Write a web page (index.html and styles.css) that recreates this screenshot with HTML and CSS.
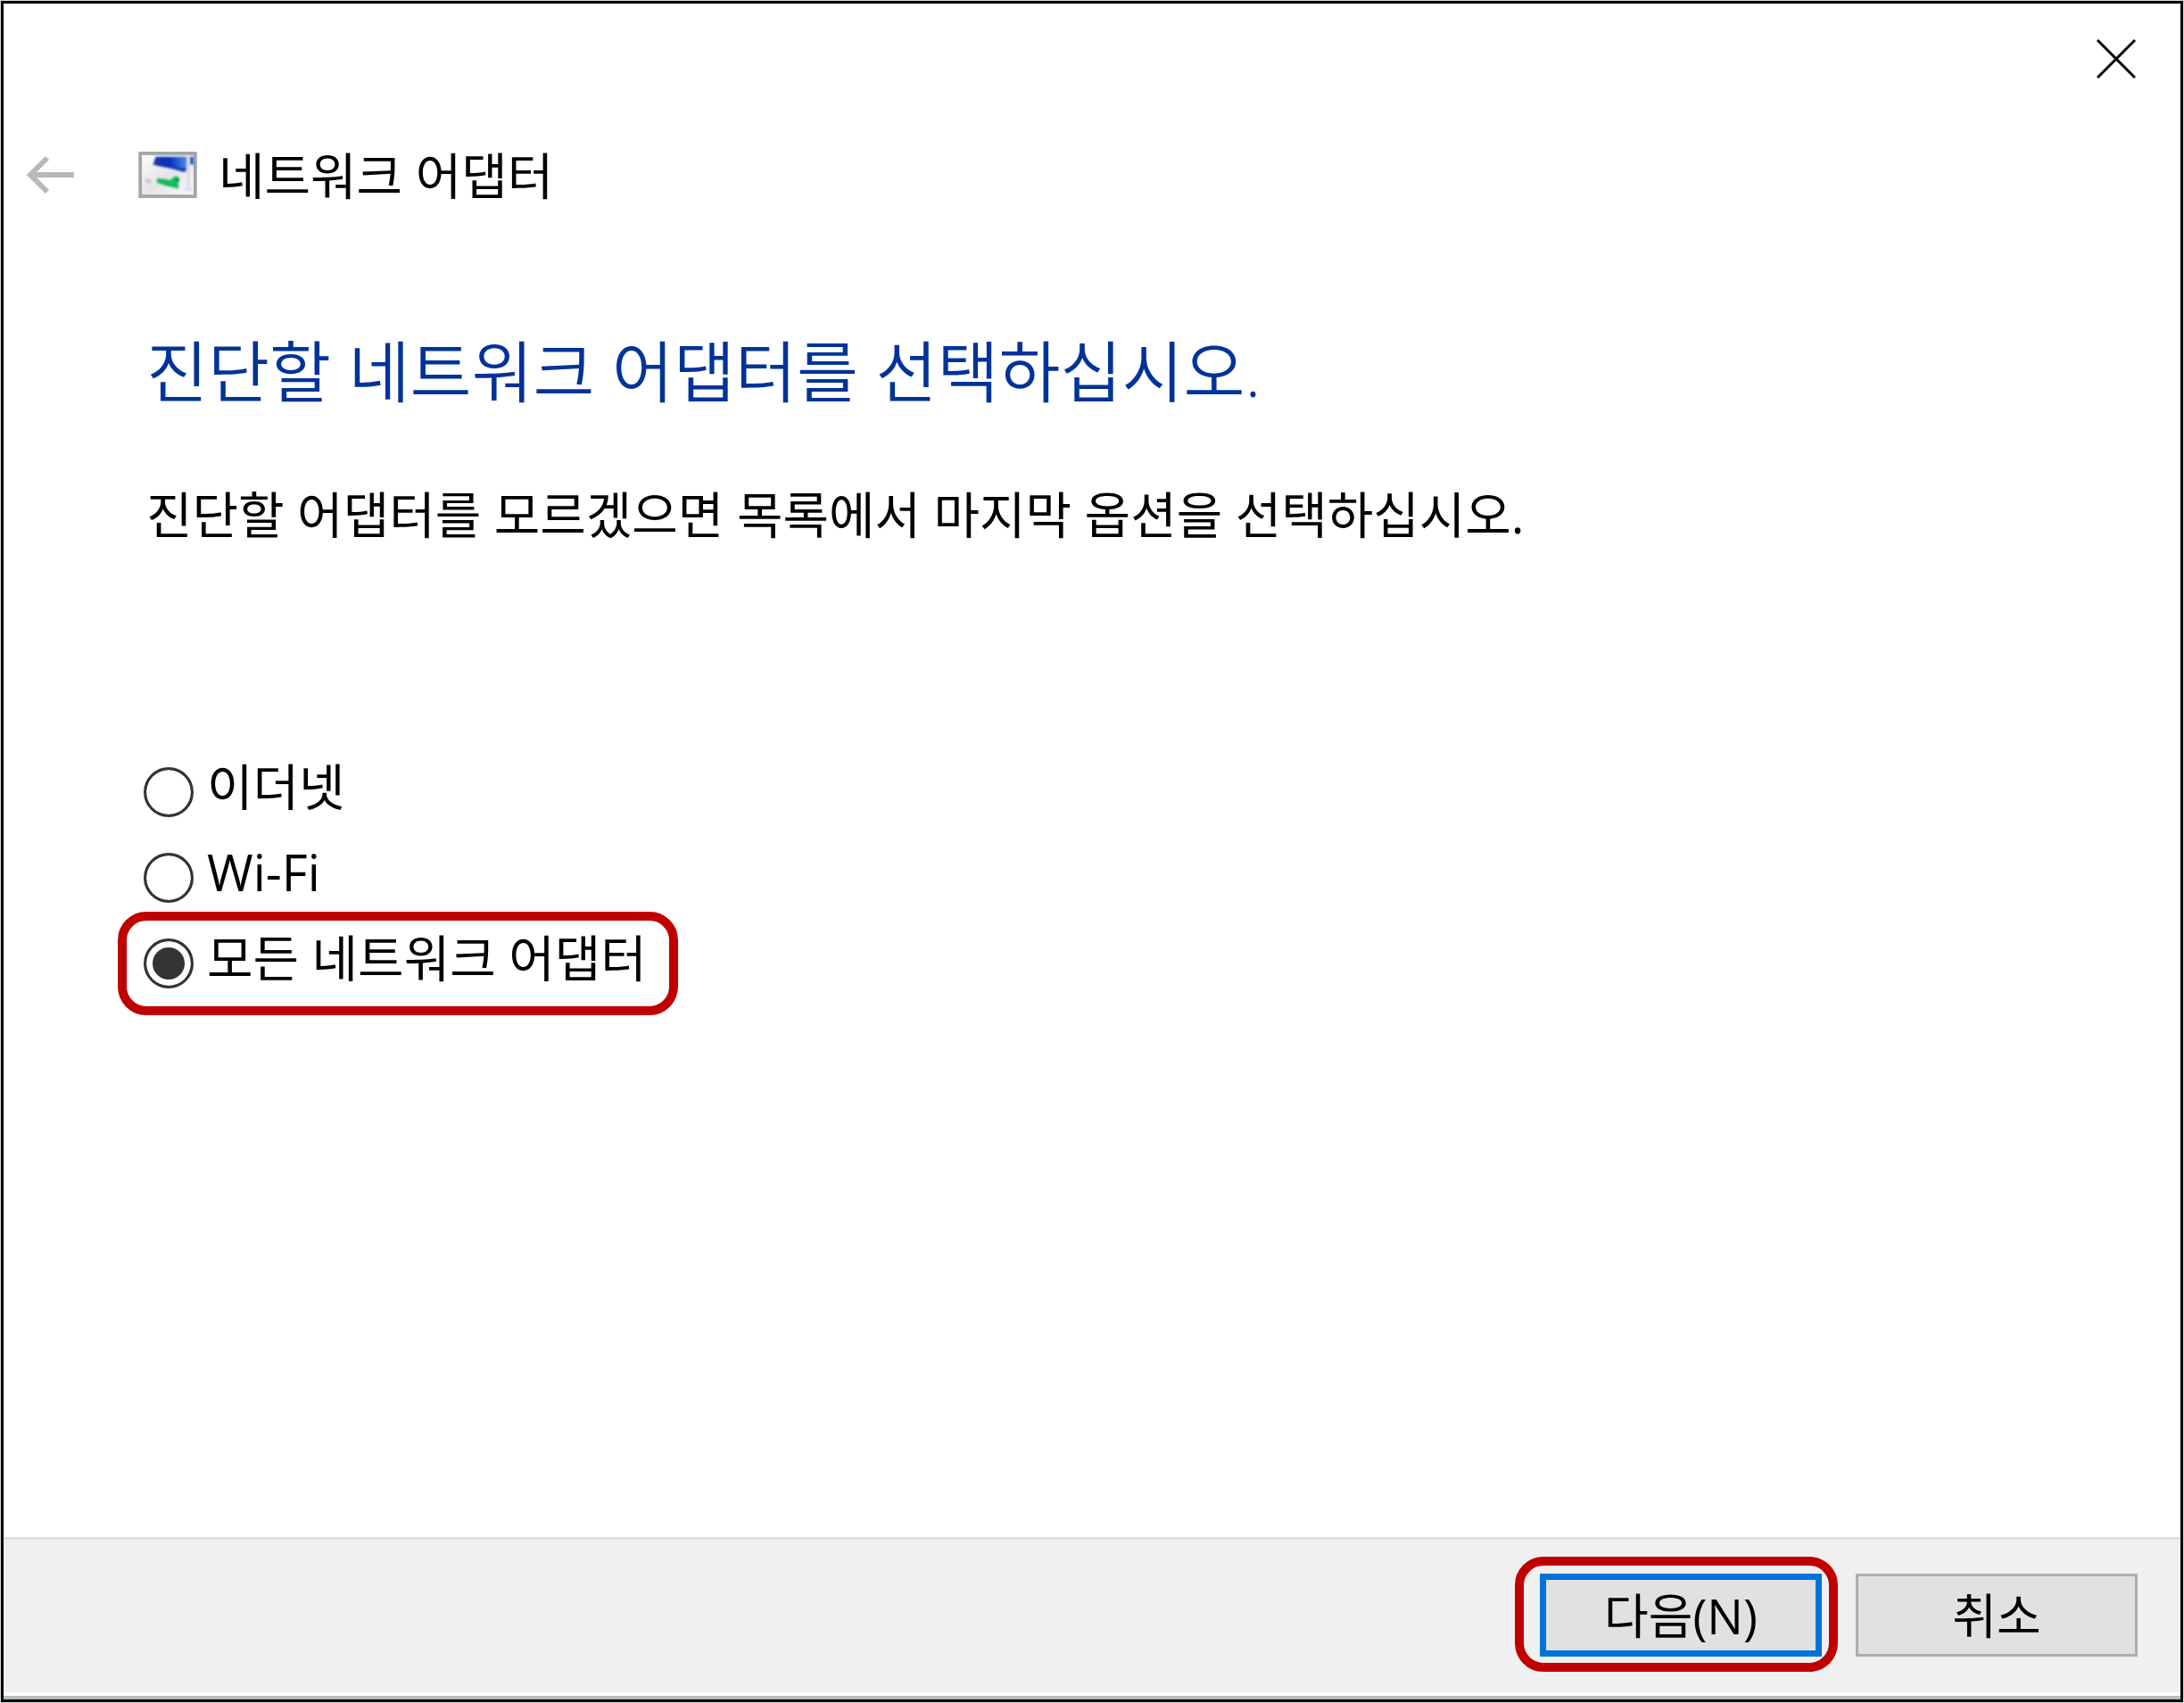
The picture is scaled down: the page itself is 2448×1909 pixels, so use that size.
FILE: index.html
```
<!DOCTYPE html>
<html lang="ko">
  <head>
    <meta charset="UTF-8" />
    <meta name="viewport" content="width=device-width, initial-scale=1.0" />
    <title>네트워크 어댑터</title>
    <link rel="stylesheet" href="styles.css">
  </head>
  <body>
    <form class="dialog">
      <!-- Title bar -->
      <div class="titlebar">
        <button type="button" class="icon-button close" aria-label="닫기">
          <svg width="44" height="44" viewBox="0 0 44 44">
            <path d="M1 1L43 43M43 1L1 43" stroke="#000" stroke-width="3" />
          </svg>
        </button>
      </div>

      <header class="nav">
        <button type="button" class="icon-button" aria-label="뒤로" disabled>
          <svg width="54" height="44" viewBox="0 0 54 44">
            <path
              d="M53 22H4M23 3L4 22L23 41"
              fill="none"
              stroke="#b9b9b9"
              stroke-width="6"
            />
          </svg>
        </button>
        <svg class="app-icon" width="66" height="52" viewBox="0 0 68 54">
          <defs>
            <linearGradient id="blue" x1="0" y1="0" x2="1" y2="0">
              <stop offset="0" stop-color="#1638a8" />
              <stop offset="0.5" stop-color="#0a2fc0" />
              <stop offset="1" stop-color="#4a8ce8" />
            </linearGradient>
            <linearGradient id="panel" x1="0" y1="0" x2="1" y2="1">
              <stop offset="0" stop-color="#fff" />
              <stop offset="0.5" stop-color="#e4e4e6" />
              <stop offset="1" stop-color="#fafaff" />
            </linearGradient>
            <filter id="soft">
              <feGaussianBlur stdDeviation="1" />
            </filter>
          </defs>
          <rect x="2" y="2" width="64" height="50" fill="url(#panel)" stroke="#a3a5a8" stroke-width="4" />
          <g filter="url(#soft)">
            <path d="M20 6L56 6L56 23L40 20L24 17L17 15Z" fill="url(#blue)" />
            <path d="M30 17L55 19L54 24L43 21Z" fill="#1c3ba8" />
            <path d="M60 6H64V15H60Z" fill="#1d55cf" />
            <path d="M8 31L15 33L14 37L8 35Z" fill="#c3c4c8" />
            <path d="M58 5V44" stroke="#d0d2d6" stroke-width="2" />
            <path d="M22 31L37 33L43 28L48 31L46 36L47 43L33 40L21 36Z" fill="#17bd5a" />
            <path d="M43 33L47 31L47 36Z" fill="#0b7040" />
            <path d="M50 44L63 40L63 48Z" fill="#dbe4f8" />
          </g>
        </svg>
        <span class="nav-title">네트워크 어댑터</span>
      </header>

      <!-- Adapter selection -->
      <main class="content">
        <h1>진단할 네트워크 어댑터를 선택하십시오.</h1>
        <p>진단할 어댑터를 모르겠으면 목록에서 마지막 옵션을 선택하십시오.</p>

        <div class="options" role="radiogroup" aria-label="네트워크 어댑터">
          <div class="option">
            <input type="radio" name="adapter" id="ethernet" />
            <label for="ethernet">이더넷</label>
          </div>
          <div class="option">
            <input type="radio" name="adapter" id="wifi" />
            <label for="wifi">Wi-Fi</label>
          </div>
          <div class="option highlight">
            <input type="radio" name="adapter" id="all" checked />
            <label for="all">모든 네트워크 어댑터</label>
          </div>
        </div>
      </main>

      <footer class="actions">
        <div class="highlight">
          <button type="button" class="button primary">다음(N)</button>
        </div>
        <button type="button" class="button">취소</button>
      </footer>
    </form>
  </body>
</html>
```
FILE: styles.css
```
* {
  box-sizing: border-box;
}

body {
  font-family: "Open Sans", "Noto Sans CJK KR", sans-serif;
  font-size: 56px;
  line-height: 80px;
  color: #000;
  background-color: #d5dad6;
  margin: 0;
  padding: 1px;
  display: flex;
  min-height: 100vh;
}

.dialog {
  flex: 1;
  display: flex;
  flex-direction: column;
  background-color: #fff;
  border: 3px solid #000;
}

.titlebar {
  display: flex;
  justify-content: flex-end;
  padding: 40px 50px;
}

.icon-button {
  display: flex;
  padding: 0;
  border: none;
  background: none;
}

.nav {
  display: flex;
  align-items: center;
  padding: 28px 26px;
}

.app-icon {
  margin-left: 71px;
  margin-right: 24px;
}

.content {
  flex: 1;
  padding: 100px 160px;
}

h1 {
  color: #003399;
  font-size: 75px;
  font-weight: 350;
  line-height: 104px;
  margin: 0 0 68px;
}

p {
  margin: 0;
}

.options {
  display: flex;
  flex-direction: column;
  align-items: flex-start;
  margin-top: 224px;
  margin-left: -3px;
}

.option {
  display: flex;
  align-items: center;
  gap: 15px;
  height: 96px;
}

.option label {
  padding-bottom: 14px;
}

input[type="radio"] {
  appearance: none;
  width: 56px;
  height: 56px;
  margin: 0;
  border: 3px solid #333;
  border-radius: 50%;
  background-color: #333;
  box-shadow: inset 0 0 0 28px #fff;
}

input[type="radio"]:checked {
  box-shadow: inset 0 0 0 7px #fff;
}

/* red callout frame drawn over the content */
.highlight {
  position: relative;
}

.highlight::after {
  content: "";
  position: absolute;
  inset: -10px -35px -10px -29px;
  border: 10px solid #c00000;
  border-radius: 32px;
  pointer-events: none;
}

.actions {
  display: flex;
  justify-content: flex-end;
  gap: 38px;
  padding: 38px 48px 44px;
  background-color: #f0f0f0;
  border-top: 3px solid #dfdfdf;
  border-bottom: 4px solid #bbb;
  box-shadow: inset 0 -4px #fff;
}

.actions .highlight {
  display: flex;
}

.actions .highlight::after {
  inset: -19px -18px -17px -28px;
}

.button {
  width: 316px;
  height: 93px;
  padding: 0;
  border: 3px solid #adadad;
  background-color: #e1e1e1;
  color: #000;
  font-family: inherit;
  font-size: 54px;
  line-height: 80px;
}

.primary {
  border: 7px solid #0073d9;
}
```
